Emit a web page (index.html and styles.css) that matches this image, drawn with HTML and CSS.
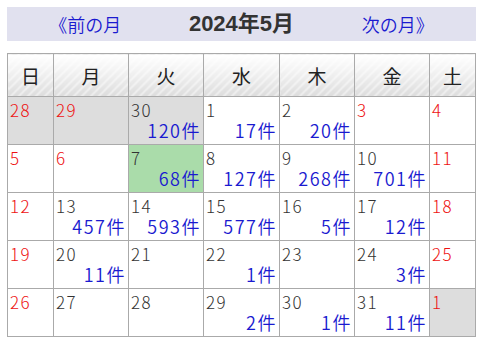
FILE: index.html
```html
<!DOCTYPE html>
<html lang="ja">
<head>
<meta charset="utf-8">
<link rel="stylesheet" href="styles.css">
</head>
<body>
<div class="wrap">
  <div class="nav">
    <a class="nav-link" href="#">《前の月</a>
    <div class="nav-title">2024年5月</div>
    <a class="nav-link" href="#">次の月》</a>
  </div>
  <table class="cal">
    <colgroup>
      <col class="c-narrow"><col class="c-wide"><col class="c-wide"><col class="c-wide3"><col class="c-wide"><col class="c-wide"><col class="c-narrow">
    </colgroup>
    <thead>
      <tr><th>日</th><th>月</th><th>火</th><th>水</th><th>木</th><th>金</th><th>土</th></tr>
    </thead>
    <tbody>
      <tr>
        <td class="other"><div class="d red">28</div></td>
        <td class="other"><div class="d red">29</div></td>
        <td class="other"><div class="d">30</div><div class="n">120件</div></td>
        <td><div class="d">1</div><div class="n">17件</div></td>
        <td><div class="d">2</div><div class="n">20件</div></td>
        <td><div class="d red">3</div></td>
        <td><div class="d red">4</div></td>
      </tr>
      <tr>
        <td><div class="d red">5</div></td>
        <td><div class="d red">6</div></td>
        <td class="today"><div class="d">7</div><div class="n">68件</div></td>
        <td><div class="d">8</div><div class="n">127件</div></td>
        <td><div class="d">9</div><div class="n">268件</div></td>
        <td><div class="d">10</div><div class="n">701件</div></td>
        <td><div class="d red">11</div></td>
      </tr>
      <tr>
        <td><div class="d red">12</div></td>
        <td><div class="d">13</div><div class="n">457件</div></td>
        <td><div class="d">14</div><div class="n">593件</div></td>
        <td><div class="d">15</div><div class="n">577件</div></td>
        <td><div class="d">16</div><div class="n">5件</div></td>
        <td><div class="d">17</div><div class="n">12件</div></td>
        <td><div class="d red">18</div></td>
      </tr>
      <tr>
        <td><div class="d red">19</div></td>
        <td><div class="d">20</div><div class="n">11件</div></td>
        <td><div class="d">21</div></td>
        <td><div class="d">22</div><div class="n">1件</div></td>
        <td><div class="d">23</div></td>
        <td><div class="d">24</div><div class="n">3件</div></td>
        <td><div class="d red">25</div></td>
      </tr>
      <tr>
        <td><div class="d red">26</div></td>
        <td><div class="d">27</div></td>
        <td><div class="d">28</div></td>
        <td><div class="d">29</div><div class="n">2件</div></td>
        <td><div class="d">30</div><div class="n">1件</div></td>
        <td><div class="d">31</div><div class="n">11件</div></td>
        <td class="other"><div class="d red">1</div></td>
      </tr>
    </tbody>
  </table>
</div>
</body>
</html>
```

FILE: styles.css
```css
html, body {
  margin: 0;
  padding: 0;
  background: #fff;
}
body {
  font-family: "Liberation Sans", "Noto Sans CJK JP", sans-serif;
  color: #333;
}
.wrap {
  padding: 7px;
  width: 469px;
}
.nav {
  display: grid;
  grid-template-columns: 1fr 1fr 1fr;
  align-items: center;
  height: 34px;
  background: #e1e1ef;
}
.nav-link {
  text-align: center;
  color: #1a1ad0;
  text-decoration: none;
  font-family: "Noto Sans CJK JP", sans-serif;
  font-size: 18px;
  line-height: 22px;
  font-weight: 350;
}
.nav-title {
  text-align: center;
  font-weight: bold;
  font-size: 22px;
  line-height: 26px;
  color: #333;
}
.cal {
  margin-top: 12px;
  border-collapse: collapse;
  width: 469px;
  table-layout: fixed;
}
.c-narrow { width: 46px; }
.c-wide { width: 75px; }
.c-wide3 { width: 76px; }
.cal th,
.cal td {
  border: 1px solid #aaa;
  padding: 0;
}
.cal th {
  height: 42px;
  font-weight: normal;
  font-size: 19px;
  font-family: "Noto Sans CJK JP", sans-serif;
  color: #222;
  background:
    repeating-linear-gradient(135deg, rgba(255,255,255,0.45) 0 2px, rgba(255,255,255,0) 2px 6px),
    linear-gradient(#ffffff 0%, #f4f4f4 35%, #dcdcdc 100%);
}
.cal td {
  height: 47px;
  vertical-align: top;
  background: #fff;
}
.cal td.other { background: #dddddd; }
.cal td.today { background: #aadcaa; }
.d {
  font-family: "Noto Sans CJK JP", sans-serif;
  font-weight: 300;
  font-size: 17px;
  line-height: 20px;
  letter-spacing: 1.5px;
  padding: 3px 0 0 2px;
  color: #333;
}
.d.red { color: #ee1111; }
.n {
  font-family: "Noto Sans CJK JP", sans-serif;
  font-weight: 350;
  font-size: 18px;
  line-height: 20px;
  letter-spacing: 1.5px;
  text-align: right;
  padding-right: 2px;
  color: #1a1ad0;
}
```
